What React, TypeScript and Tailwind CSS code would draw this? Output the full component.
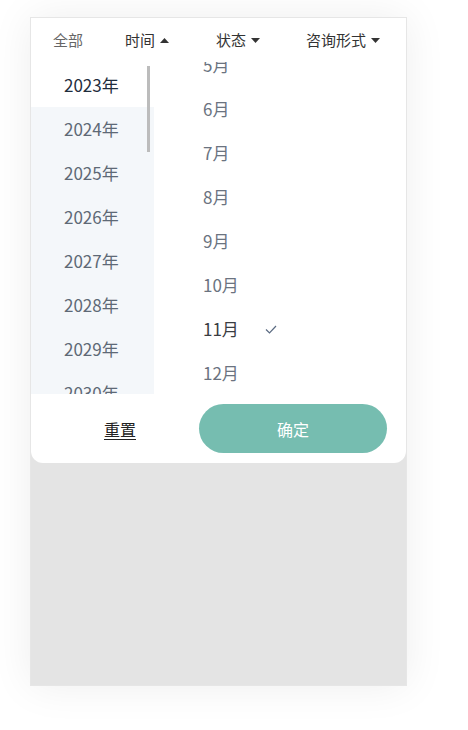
import React from "react";

const years = ["2023年", "2024年", "2025年", "2026年", "2027年", "2028年", "2029年", "2030年", "2031年"];
const months = ["1月", "2月", "3月", "4月", "5月", "6月", "7月", "8月", "9月", "10月", "11月", "12月"];

function Caret({ up }: { up?: boolean }) {
  return (
    <svg width="9" height="5" viewBox="0 0 9 5" className="ml-[5px]">
      {up ? <path d="M0 5 L4.5 0 L9 5 Z" fill="#333" /> : <path d="M0 0 L4.5 5 L9 0 Z" fill="#333" />}
    </svg>
  );
}

export default function App() {
  return (
    <div
      className="min-h-screen bg-white pt-[17px] pl-[30px]"
      style={{ fontFamily: '"Noto Sans CJK SC", "Noto Sans", sans-serif' }}
    >
      <div className="w-[377px] h-[669px] border border-[#e6e6e6] bg-[#e4e4e4] shadow-[0_0_40px_rgba(0,0,0,0.07)] flex flex-col">
        <div className="bg-white rounded-b-[12px] flex flex-col">
          {/* tabs */}
          <div className="h-[44px] flex items-center pl-[22px] text-[15px] text-[#333]">
            <span className="text-[#666]">全部</span>
            <span className="ml-[42px] flex items-center">
              时间
              <Caret up />
            </span>
            <span className="ml-[47px] flex items-center">
              状态
              <Caret />
            </span>
            <span className="ml-[46px] flex items-center">
              咨询形式
              <Caret />
            </span>
          </div>

          {/* lists */}
          <div className="h-[332px] flex overflow-hidden">
            <div className="relative w-[123px] bg-[#f4f7fa] overflow-hidden">
              <div className="h-[1px] bg-white" />
              {years.map((y, i) => (
                <div
                  key={y}
                  className={
                    "h-[44px] flex items-center pl-[33px] text-[17px] " +
                    (i === 0 ? "bg-white text-[#1f2d3d]" : "text-[#5e6976]")
                  }
                >
                  {y}
                </div>
              ))}
              <div className="absolute right-[4px] top-[4px] w-[3px] h-[86px] bg-[#bcbcbc]" />
            </div>
            <div className="flex-1 overflow-hidden">
              <div className="-mt-[195px]">
                {months.map((m) => (
                  <div
                    key={m}
                    className={
                      "h-[44px] flex items-center pl-[49px] text-[17px] " +
                      (m === "11月" ? "text-[#3a3d42]" : "text-[#6b7380]")
                    }
                  >
                    <span className="w-[62px]">{m}</span>
                    {m === "11月" && (
                      <svg width="12" height="9" viewBox="0 0 12 9">
                        <path d="M1 4.5 L4.5 8 L11 1" fill="none" stroke="#5b6b82" strokeWidth="1.2" />
                      </svg>
                    )}
                  </div>
                ))}
              </div>
            </div>
          </div>

          {/* footer */}
          <div className="h-[69px] flex items-center pr-[19px]">
            <div className="w-[168px] pl-[10px] text-center">
              <span className="text-[16px] text-[#222] underline underline-offset-[3px]">重置</span>
            </div>
            <button className="flex-1 h-[49px] rounded-full bg-[#76bdb0] text-white text-[16px]">确定</button>
          </div>
        </div>
      </div>
    </div>
  );
}
